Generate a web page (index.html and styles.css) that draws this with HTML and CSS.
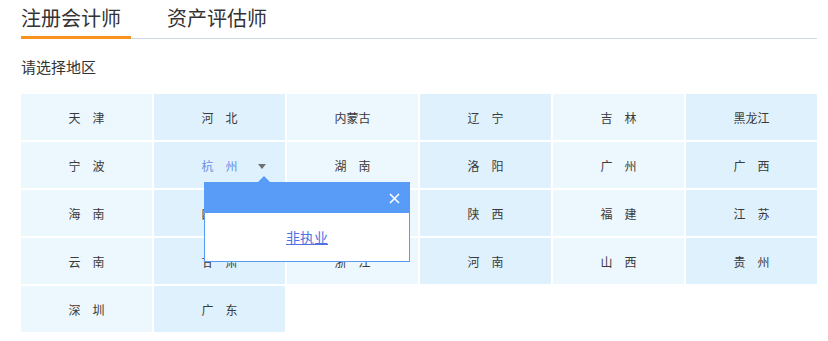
FILE: index.html
```html
<!DOCTYPE html>
<html lang="zh-CN">
<head>
  <meta charset="UTF-8" />
  <title>选择地区</title>
  <link rel="stylesheet" href="styles.css">
</head>
<body>
  <div class="page">
    <!-- Tabs -->
    <div class="tabs">
      <div class="tab active">注册会计师</div>
      <div class="tab">资产评估师</div>
    </div>

    <div class="label">请选择地区</div>

    <!-- Region grid -->
    <div class="region-grid">
      <div class="cell">天　津</div>
      <div class="cell">河　北</div>
      <div class="cell">内蒙古</div>
      <div class="cell">辽　宁</div>
      <div class="cell">吉　林</div>
      <div class="cell">黑龙江</div>

      <div class="cell">宁　波</div>
      <div class="cell open">
        <span class="selected">杭　州</span>
        <span class="caret"></span>
        <div class="popup">
          <div class="popup-arrow"></div>
          <div class="popup-head">
            <svg class="close" width="11" height="11" viewBox="0 0 11 11">
              <path d="M1 1 L10 10 M10 1 L1 10" stroke="#fff" stroke-width="1.6" fill="none"/>
            </svg>
          </div>
          <div class="popup-body"><a href="#">非执业</a></div>
        </div>
      </div>
      <div class="cell">湖　南</div>
      <div class="cell">洛　阳</div>
      <div class="cell">广　州</div>
      <div class="cell">广　西</div>

      <div class="cell">海　南</div>
      <div class="cell">四　川</div>
      <div class="cell">重　庆</div>
      <div class="cell">陕　西</div>
      <div class="cell">福　建</div>
      <div class="cell">江　苏</div>

      <div class="cell">云　南</div>
      <div class="cell">甘　肃</div>
      <div class="cell">浙　江</div>
      <div class="cell">河　南</div>
      <div class="cell">山　西</div>
      <div class="cell">贵　州</div>

      <div class="cell">深　圳</div>
      <div class="cell">广　东</div>
    </div>
  </div>
</body>
</html>
```

FILE: styles.css
```css
body {
  margin: 0;
  font-family: "Noto Sans CJK SC", "Noto Sans", sans-serif;
  background-color: #ffffff;
  color: #333;
}

.page {
  width: 796px;
  padding: 0 21px;
}

.tabs {
  display: flex;
  padding-top: 4px;
  border-bottom: 1px solid #cfd6e2;
}

.tab {
  font-size: 20px;
  line-height: 28px;
  padding-bottom: 4px;
  margin-bottom: -1px;
  border-bottom: 3px solid transparent;
  margin-right: 36px;
  color: #333;
}

.tab.active {
  width: 110px;
  border-bottom-color: #f7931e;
}

.label {
  font-size: 15px;
  line-height: 20px;
  margin-top: 18px;
}

.region-grid {
  margin-top: 17px;
  display: grid;
  grid-template-columns: repeat(6, 131px);
  grid-auto-rows: 46px;
  gap: 2px;
}

.cell {
  position: relative;
  display: flex;
  align-items: center;
  justify-content: center;
  font-size: 12px;
  color: #3a3a3a;
  background-color: #ecf7fe;
}

.cell:nth-child(even) {
  background-color: #dff1fd;
}

.cell .selected {
  color: #6a8fe2;
}

.caret {
  position: absolute;
  right: 19px;
  top: 22px;
  width: 0;
  height: 0;
  border-left: 4px solid transparent;
  border-right: 4px solid transparent;
  border-top: 5px solid #707070;
}

.popup {
  position: absolute;
  left: 50px;
  top: 40px;
  width: 204px;
  border: 1px solid #599cf8;
  background: #ffffff;
  z-index: 2;
}

.popup-arrow {
  position: absolute;
  left: 53px;
  top: -7px;
  width: 0;
  height: 0;
  border-left: 6px solid transparent;
  border-right: 6px solid transparent;
  border-bottom: 6px solid #599cf8;
}

.popup-head {
  height: 30px;
  background-color: #599cf8;
  display: flex;
  align-items: center;
  justify-content: flex-end;
  padding-right: 9px;
}

.popup-body {
  height: 48px;
  display: flex;
  align-items: center;
  justify-content: center;
}

.popup-body a {
  font-size: 14px;
  color: #4f72e3;
  text-decoration: underline;
}
```
